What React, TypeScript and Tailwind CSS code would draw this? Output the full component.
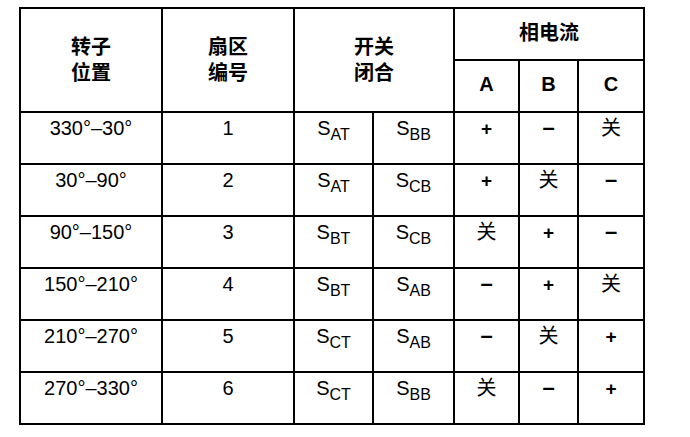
const rows = [
  { pos: "330°–30°", sector: "1", s1: "AT", s2: "BB", a: "+", b: "–", c: "关" },
  { pos: "30°–90°", sector: "2", s1: "AT", s2: "CB", a: "+", b: "关", c: "–" },
  { pos: "90°–150°", sector: "3", s1: "BT", s2: "CB", a: "关", b: "+", c: "–" },
  { pos: "150°–210°", sector: "4", s1: "BT", s2: "AB", a: "–", b: "+", c: "关" },
  { pos: "210°–270°", sector: "5", s1: "CT", s2: "AB", a: "–", b: "关", c: "+" },
  { pos: "270°–330°", sector: "6", s1: "CT", s2: "BB", a: "关", b: "–", c: "+" },
];

function Switch({ sub }: { sub: string }) {
  return (
    <span>
      S<span className="text-[16px] align-[-5px]">{sub}</span>
    </span>
  );
}

function Phase({ v }: { v: string }) {
  if (v === "关") return <span className="text-[20px]">关</span>;
  if (v === "–") return <span className="font-bold text-[22px] leading-[22px]">–</span>;
  return <span className="font-bold text-[19px]">{v}</span>;
}

const cell = "border-2 border-black";
const dataCell = `${cell} h-[52px] align-top pt-[3px] text-center`;
const letterCell = `${cell} h-[52px] pb-[5px] font-bold`;

export default function App() {
  return (
    <div
      className="bg-white w-[690px] h-[437px] pt-[7px] pl-[19px] text-black"
      style={{ fontFamily: '"Liberation Sans", "Noto Sans CJK SC", sans-serif' }}
    >
      <table className="table-fixed border-collapse text-[20px] leading-[24px]">
        <colgroup>
          <col className="w-[142px]" />
          <col className="w-[132px]" />
          <col className="w-[79px]" />
          <col className="w-[81px]" />
          <col className="w-[65px]" />
          <col className="w-[59px]" />
          <col className="w-[66px]" />
        </colgroup>
        <thead>
          <tr>
            <th rowSpan={2} className={`${cell} leading-[26px] font-bold`}>
              转子<br />位置
            </th>
            <th rowSpan={2} className={`${cell} leading-[26px] font-bold`}>
              扇区<br />编号
            </th>
            <th rowSpan={2} colSpan={2} className={`${cell} leading-[26px] font-bold`}>
              开关<br />闭合
            </th>
            <th colSpan={3} className={`${cell} h-[52px] pb-[2px] font-bold`}>
              相电流
            </th>
          </tr>
          <tr>
            <th className={letterCell}>A</th>
            <th className={letterCell}>B</th>
            <th className={letterCell}>C</th>
          </tr>
        </thead>
        <tbody>
          {rows.map((r) => (
            <tr key={r.sector}>
              <td className={dataCell}>{r.pos}</td>
              <td className={dataCell}>{r.sector}</td>
              <td className={dataCell}>
                <Switch sub={r.s1} />
              </td>
              <td className={dataCell}>
                <Switch sub={r.s2} />
              </td>
              <td className={dataCell}>
                <Phase v={r.a} />
              </td>
              <td className={dataCell}>
                <Phase v={r.b} />
              </td>
              <td className={dataCell}>
                <Phase v={r.c} />
              </td>
            </tr>
          ))}
        </tbody>
      </table>
    </div>
  );
}
